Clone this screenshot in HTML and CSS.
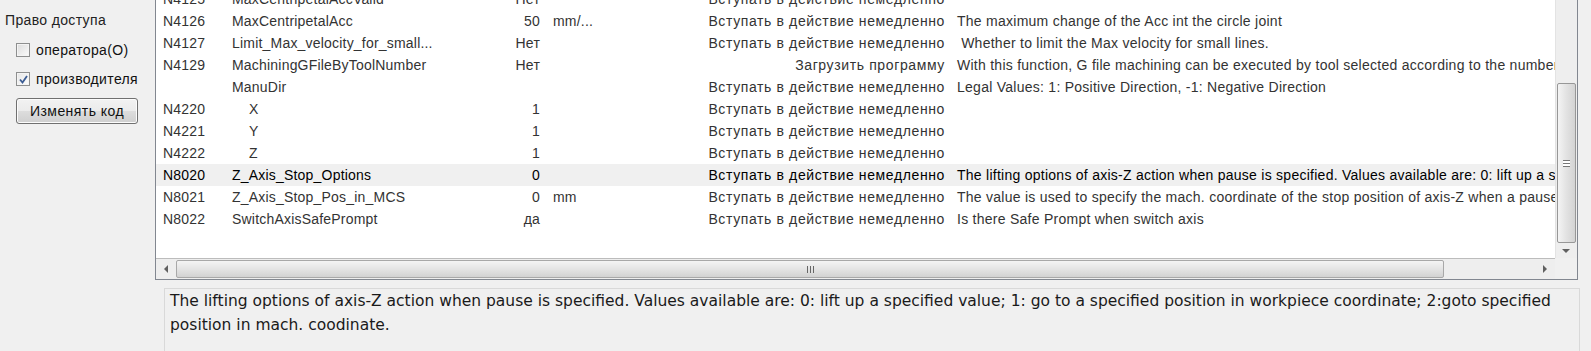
FILE: index.html
```html
<!DOCTYPE html>
<html lang="ru">
<head>
    <meta charset="UTF-8">
    <title>Параметры</title>
    <link rel="stylesheet" href="styles.css">
</head>
<body>
    <div class="sidebar">
        <div class="side-title">Право доступа</div>
        <label class="check-row">
            <span class="checkbox"></span>
            <span>оператора(О)</span>
        </label>
        <label class="check-row">
            <span class="checkbox checked">
                <svg width="11" height="11" viewBox="0 0 11 11"><path d="M2 5.5 L4.5 8.5 L9 2" fill="none" stroke="#3b5c93" stroke-width="1.8"/></svg>
            </span>
            <span>производителя</span>
        </label>
        <button class="code-btn">Изменять код</button>
    </div>

    <div class="main">
        <div class="grid-frame">
            <div class="grid-body">
                <div class="rows">
                    <div class="row"><span>N4125</span><span>MaxCentripetalAccValid</span><span class="num">Нет</span><span></span><span class="eff">Вступать в действие немедленно</span><span></span></div>
                    <div class="row"><span>N4126</span><span>MaxCentripetalAcc</span><span class="num">50</span><span>mm/...</span><span class="eff">Вступать в действие немедленно</span><span>The maximum change of the Acc int the circle joint</span></div>
                    <div class="row"><span>N4127</span><span>Limit_Max_velocity_for_small...</span><span class="num">Нет</span><span></span><span class="eff">Вступать в действие немедленно</span><span class="pre"> Whether to limit the Max velocity for small lines.</span></div>
                    <div class="row"><span>N4129</span><span>MachiningGFileByToolNumber</span><span class="num">Нет</span><span></span><span class="eff">Загрузить программу</span><span>With this function, G file machining can be executed by tool selected according to the number of the tool</span></div>
                    <div class="row"><span></span><span>ManuDir</span><span class="num"></span><span></span><span class="eff">Вступать в действие немедленно</span><span>Legal Values: 1: Positive Direction, -1: Negative Direction</span></div>
                    <div class="row"><span>N4220</span><span class="sub">X</span><span class="num">1</span><span></span><span class="eff">Вступать в действие немедленно</span><span></span></div>
                    <div class="row"><span>N4221</span><span class="sub">Y</span><span class="num">1</span><span></span><span class="eff">Вступать в действие немедленно</span><span></span></div>
                    <div class="row"><span>N4222</span><span class="sub">Z</span><span class="num">1</span><span></span><span class="eff">Вступать в действие немедленно</span><span></span></div>
                    <div class="row selected"><span>N8020</span><span>Z_Axis_Stop_Options</span><span class="num">0</span><span></span><span class="eff">Вступать в действие немедленно</span><span>The lifting options of axis-Z action when pause is specified. Values available are: 0: lift up a specified value; 1: go to a specified position</span></div>
                    <div class="row"><span>N8021</span><span>Z_Axis_Stop_Pos_in_MCS</span><span class="num">0</span><span>mm</span><span class="eff">Вступать в действие немедленно</span><span>The value is used to specify the mach. coordinate of the stop position of axis-Z when a pause is specified</span></div>
                    <div class="row"><span>N8022</span><span>SwitchAxisSafePrompt</span><span class="num">да</span><span></span><span class="eff">Вступать в действие немедленно</span><span>Is there Safe Prompt when switch axis</span></div>
                </div>
            </div>
            <div class="vscroll">
                <div class="vthumb"><span class="grip-h"></span></div>
                <div class="arrow-btn"><span class="tri-down"></span></div>
            </div>
            <div class="hscroll">
                <div class="arrow-btn"><span class="tri-left"></span></div>
                <div class="hthumb"><span class="grip-v"></span></div>
                <div class="htrack"></div>
                <div class="arrow-btn"><span class="tri-right"></span></div>
            </div>
            <div class="corner"></div>
        </div>

        <div class="desc-panel">
            The lifting options of axis-Z action when pause is specified. Values available are: 0: lift up a specified value; 1: go to a specified position in workpiece coordinate; 2:goto specified position in mach. coodinate.
        </div>
    </div>
</body>
</html>
```

FILE: styles.css
```css
* {
    margin: 0;
    padding: 0;
    box-sizing: border-box;
}
body {
    display: flex;
    width: 1591px;
    height: 351px;
    overflow: hidden;
    background: #f0f0f0;
    font-family: "Liberation Sans", Arial, sans-serif;
    font-size: 14px;
    color: #333;
}
.sidebar {
    width: 155px;
    flex-shrink: 0;
    padding: 12px 0 0 5px;
    display: flex;
    flex-direction: column;
    letter-spacing: 0.35px;
}
.side-title {
    line-height: 16px;
    color: #222;
}
.check-row {
    display: flex;
    align-items: center;
    gap: 6px;
    height: 22px;
    margin-left: 11px;
    margin-top: 7px;
    color: #111;
}
.check-row:first-of-type {
    margin-top: 11px;
}
.checkbox {
    width: 14px;
    height: 14px;
    border: 1px solid #8e8f8f;
    background: linear-gradient(135deg, #dcdcdc, #fbfbfb);
    box-shadow: inset 0 0 0 1px #f4f4f4;
    display: flex;
    align-items: center;
    justify-content: center;
}
.checkbox.checked {
    background: linear-gradient(135deg, #e6e6e6, #fdfdfd);
}
.code-btn {
    margin: 8px 0 0 11px;
    width: 122px;
    height: 26px;
    border: 1px solid #707070;
    border-radius: 3px;
    background: linear-gradient(#f2f2f2 0%, #ebebeb 49%, #dddddd 50%, #cfcfcf 100%);
    box-shadow: inset 0 0 0 1px #fcfcfc;
    font-family: "Liberation Sans", Arial, sans-serif;
    font-size: 14px;
    letter-spacing: 0.45px;
    color: #111;
}
.main {
    flex: 1;
    display: flex;
    flex-direction: column;
}
.grid-frame {
    width: 1423px;
    display: grid;
    grid-template-columns: 1399px 22px;
    grid-template-rows: 258px 21px;
    border: 1px solid #828790;
    border-top: none;
    background: #fff;
}
.grid-body {
    overflow: hidden;
}
.rows {
    margin-top: -12px;
}
.row {
    display: grid;
    grid-template-columns: 70px 254px 66px 144px 260px 605px;
    height: 22px;
    line-height: 22px;
    white-space: nowrap;
    letter-spacing: 0.2px;
}
.row span {
    overflow: hidden;
}
.row span:first-child {
    padding-left: 7px;
}
.row span:nth-child(2) {
    padding-left: 6px;
}
.row span:nth-child(4) {
    padding-left: 7px;
}
.row span:nth-child(6) {
    padding-left: 7px;
    letter-spacing: 0.26px;
}
.row .sub {
    padding-left: 23px !important;
}
.row .num {
    text-align: right;
    padding-right: 6px;
}
.row .eff {
    text-align: right;
    padding-right: 5px;
    letter-spacing: 0.62px;
}
.row .pre {
    white-space: pre;
}
.row.selected {
    background: #f0f0f0;
    color: #000;
}
.vscroll {
    background: #eeeeee;
    border-left: 1px solid #e3e3e3;
    display: flex;
    flex-direction: column;
    justify-content: flex-end;
}
.vthumb {
    width: 19px;
    height: 160px;
    margin-left: 1px;
    border: 1px solid #979797;
    border-radius: 2px;
    background: linear-gradient(90deg, #f4f4f4, #e2e2e2 50%, #d3d3d3);
    display: flex;
    align-items: center;
    justify-content: center;
}
.grip-h {
    width: 7px;
    height: 7px;
    border-top: 1px solid #777;
    border-bottom: 1px solid #777;
    background: linear-gradient(#fff 0 2px, #777 2px 3px, #fff 3px);
}
.arrow-btn {
    width: 20px;
    height: 15px;
    display: flex;
    align-items: center;
    justify-content: center;
    flex-shrink: 0;
}
.tri-down {
    border-left: 4px solid transparent;
    border-right: 4px solid transparent;
    border-top: 4px solid #606060;
}
.hscroll {
    display: flex;
    align-items: stretch;
    background: #eeeeee;
    border-top: 1px solid #bcbcbc;
}
.hscroll .arrow-btn {
    height: 20px;
}
.tri-left {
    border-top: 4px solid transparent;
    border-bottom: 4px solid transparent;
    border-right: 4px solid #606060;
}
.tri-right {
    border-top: 4px solid transparent;
    border-bottom: 4px solid transparent;
    border-left: 4px solid #606060;
}
.hthumb {
    width: 1268px;
    margin: 1px 0;
    border: 1px solid #a8a8a8;
    border-radius: 2px;
    background: linear-gradient(#f4f4f4, #e4e4e4 50%, #d2d2d2);
    display: flex;
    align-items: center;
    justify-content: center;
}
.grip-v {
    width: 7px;
    height: 7px;
    border-left: 1px solid #666;
    border-right: 1px solid #666;
    background: linear-gradient(90deg, transparent 0 2px, #666 2px 3px, transparent 3px);
}
.htrack {
    flex: 1;
}
.corner {
    background: #f0f0f0;
}
.desc-panel {
    flex: 1;
    margin: 8px 0 0 9px;
    width: 1416px;
    border: 1px solid #d9d9d9;
    border-bottom: none;
    padding: 0 9px 0 5px;
    font-family: "DejaVu Sans", Verdana, sans-serif;
    font-size: 15.5px;
    line-height: 24px;
    color: #1a1a1a;
}
```
